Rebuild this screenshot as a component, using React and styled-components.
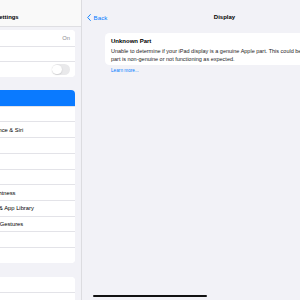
import React from "react";
import styled, { createGlobalStyle } from "styled-components";

const Global = createGlobalStyle`
  html, body { margin: 0; padding: 0; background: #f2f2f7; }
  body { font-family: "Liberation Sans", Arial, sans-serif; -webkit-font-smoothing: antialiased; }
  * { box-sizing: border-box; }
`;

const Viewport = styled.div`
  width: 300px;
  height: 300px;
  overflow: hidden;
  position: relative;
  background: #f2f2f7;
`;

const Screen = styled.div`
  width: 434px;
  height: 300px;
  margin-left: -67px;
  display: flex;
  position: relative;
`;

const Sidebar = styled.aside`
  width: 149px;
  flex-shrink: 0;
  background: #f2f2f7;
  border-right: 1px solid #dcdce0;
  display: flex;
  flex-direction: column;
  overflow: hidden;
`;

const SidebarHeader = styled.header`
  flex-shrink: 0;
  height: 27px;
  padding-top: 8px;
  border-bottom: 1px solid #dfdfe3;
  background: #f9f9f9;
  display: flex;
  align-items: center;
  justify-content: center;
  font-weight: 700;
  font-size: 5.9px;
  color: #000;
`;

const List = styled.div`
  flex-shrink: 0;
  padding: 3px 6px 0;
  display: flex;
  flex-direction: column;
`;

const Group = styled.div`
  flex-shrink: 0;
  background: #fff;
  border-radius: 4px;
  overflow: hidden;
  margin-bottom: ${(p) => p.$gap || 13}px;
`;

const Row = styled.div`
  height: 15.7px;
  display: flex;
  align-items: center;
  padding: 0 5px 0 23px;
  font-size: 5.8px;
  color: ${(p) => (p.$selected ? "#fff" : "#000")};
  background: ${(p) => (p.$selected ? "#0a7aff" : "#fff")};
  & + & {
    border-top: 0.8px solid #e3e3e8;
  }
`;

const Label = styled.span`
  flex: 1;
  white-space: nowrap;
`;

const Value = styled.span`
  color: #8a8a8e;
  font-size: 5.8px;
`;

const Track = styled.span`
  width: 18.5px;
  height: 11px;
  border-radius: 6px;
  background: #e9e9eb;
  display: flex;
  align-items: center;
  padding: 0 0.8px;
`;

const Knob = styled.span`
  width: 9.4px;
  height: 9.4px;
  border-radius: 50%;
  background: #fff;
  box-shadow: 0 0.5px 1.5px rgba(0, 0, 0, 0.18);
`;

const Detail = styled.main`
  flex: 1;
  display: flex;
  flex-direction: column;
  background: #f2f2f7;
`;

const DetailHeader = styled.header`
  flex-shrink: 0;
  height: 28px;
  padding: 6px 5px 0;
  display: grid;
  grid-template-columns: 1fr auto 1fr;
  align-items: center;
`;

const BackButton = styled.span`
  display: inline-flex;
  align-items: center;
  gap: 2.6px;
  color: #007aff;
  font-size: 6.2px;
`;

const NavTitle = styled.h1`
  margin: 0;
  font-size: 6px;
  font-weight: 700;
  color: #000;
`;

const Content = styled.section`
  padding: 5px 23px 0;
`;

const InfoCard = styled.div`
  background: #fff;
  border-radius: 4.5px;
  padding: 4px 6px 2.5px;
`;

const CardTitle = styled.div`
  font-size: 6px;
  font-weight: 700;
  line-height: 8px;
  margin-bottom: 1.5px;
  color: #000;
`;

const CardBody = styled.div`
  font-size: 5.5px;
  line-height: 8px;
  color: #1c1c1e;
`;

const FootLink = styled.div`
  font-size: 4.7px;
  line-height: 6px;
  color: #007aff;
  padding: 3px 6px 0;
`;

const HomeIndicator = styled.div`
  position: absolute;
  bottom: 2.6px;
  left: 50%;
  transform: translateX(-50%);
  width: 114px;
  height: 2.6px;
  border-radius: 2px;
  background: #111;
`;

const Toggle = () => (
  <Track>
    <Knob />
  </Track>
);

const connectivity = [
  { label: "Bluetooth", value: "On" },
  { label: "Battery" },
  { label: "VPN", toggle: true },
];

const system = [
  "General",
  "Accessibility",
  "Apple Intelligence & Siri",
  "Apple Pencil",
  "Camera",
  "Control Center",
  "Display & Brightness",
  "Home Screen & App Library",
  "Multitasking & Gestures",
  "Search",
  "Wallpaper",
];

const alerts = ["Notifications", "Sounds", "Focus", "Screen Time"];

export default function App() {
  return (
    <>
      <Global />
      <Viewport>
        <Screen>
          <Sidebar>
            <SidebarHeader>Settings</SidebarHeader>
            <List>
              <Group>
                {connectivity.map((r) => (
                  <Row key={r.label}>
                    <Label>{r.label}</Label>
                    {r.value && <Value>{r.value}</Value>}
                    {r.toggle && <Toggle />}
                  </Row>
                ))}
              </Group>
              <Group $gap={14}>
                {system.map((l, i) => (
                  <Row key={l} $selected={i === 0}>
                    <Label>{l}</Label>
                  </Row>
                ))}
              </Group>
              <Group>
                {alerts.map((l) => (
                  <Row key={l}>
                    <Label>{l}</Label>
                  </Row>
                ))}
              </Group>
            </List>
          </Sidebar>
          <Detail>
            <DetailHeader>
              <BackButton>
                <svg width="4" height="7" viewBox="0 0 4 7" fill="none">
                  <path d="M3.4 0.5 L0.7 3.5 L3.4 6.5" stroke="#007aff" strokeWidth="0.9" strokeLinecap="round" strokeLinejoin="round" />
                </svg>
                Back
              </BackButton>
              <NavTitle>Display</NavTitle>
              <span />
            </DetailHeader>
            <Content>
              <InfoCard>
                <CardTitle>Unknown Part</CardTitle>
                <CardBody>
                  Unable to determine if your iPad display is a genuine Apple part. This could be because the part is non-genuine or not functioning as expected.
                </CardBody>
              </InfoCard>
              <FootLink>Learn more...</FootLink>
            </Content>
          </Detail>
          <HomeIndicator />
        </Screen>
      </Viewport>
    </>
  );
}
